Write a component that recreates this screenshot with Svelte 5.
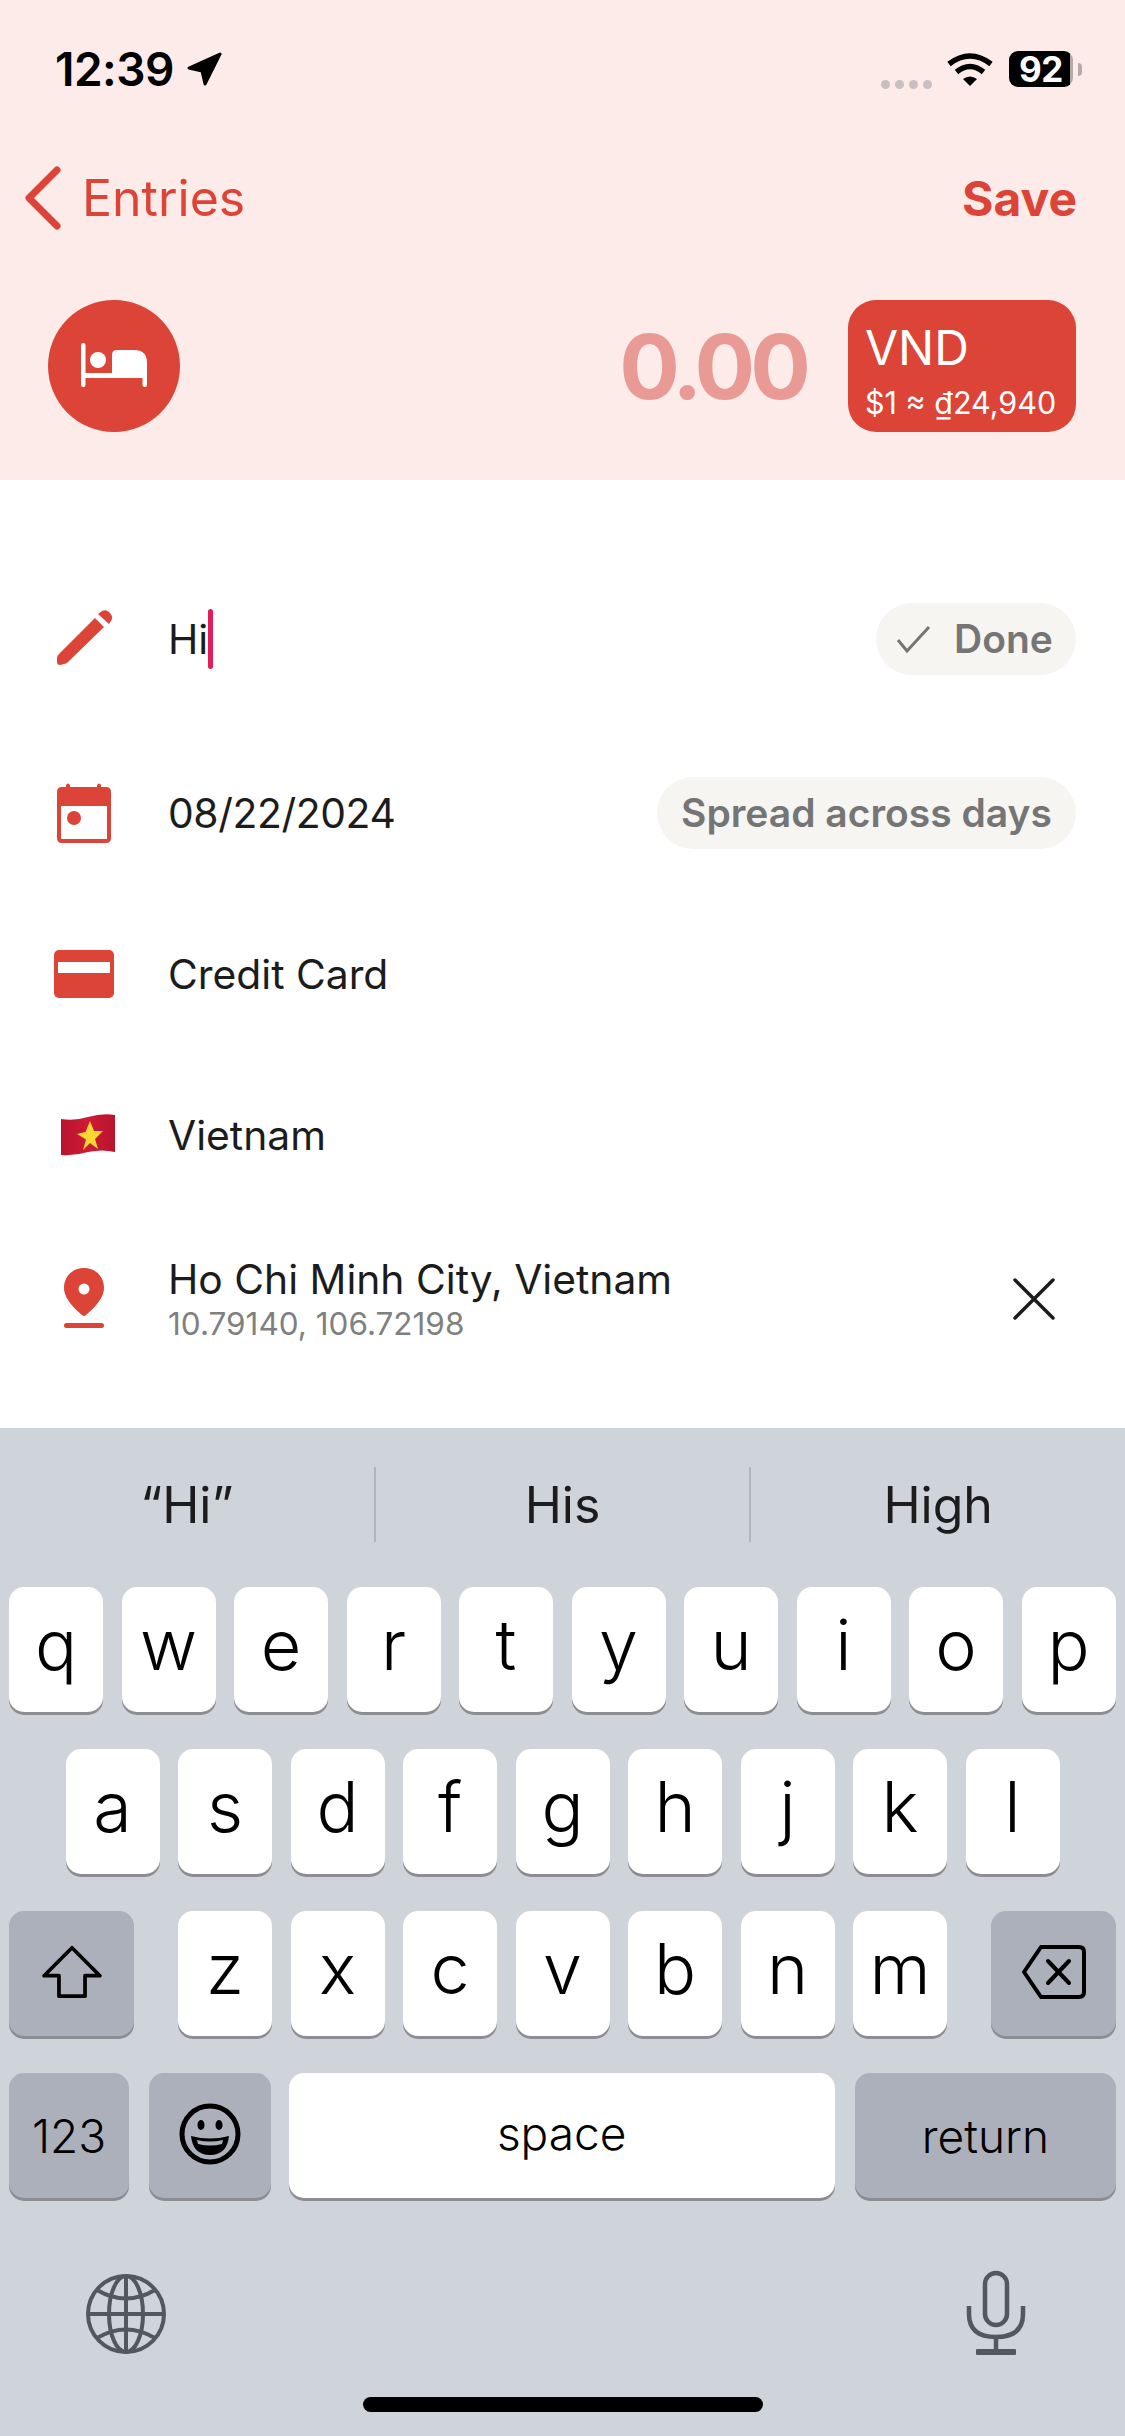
<script lang="ts">
  const rowOne = ["q", "w", "e", "r", "t", "y", "u", "i", "o", "p"];
  const rowTwo = ["a", "s", "d", "f", "g", "h", "j", "k", "l"];
  const rowThree = ["z", "x", "c", "v", "b", "n", "m"];
  const suggestions = ["“Hi”", "His", "High"];
</script>

<div class="screen">
  <header class="top">
    <div class="status">
      <div class="clock">
        <span>12:39</span>
        <svg class="arrow" viewBox="0 0 36 36" width="36" height="36">
          <path d="M34 3 L3 17 L16 20 L19 33 Z" fill="#000" stroke="#000" stroke-width="3" stroke-linejoin="round" />
        </svg>
      </div>
      <div class="indicators">
        <div class="dots"><i></i><i></i><i></i><i></i></div>
        <svg class="wifi" viewBox="0 0 46 36" width="46" height="36">
          <path d="M2 13 Q23 -3 44 13" fill="none" stroke="#000" stroke-width="5.5" />
          <path d="M9.5 21 Q23 10 36.5 21" fill="none" stroke="#000" stroke-width="5.5" />
          <path d="M16 28 Q23 23 30 28 L23 35 Z" fill="#000" />
        </svg>
        <div class="battery"><span>92</span></div>
        <i class="nub"></i>
      </div>
    </div>

    <nav class="nav">
      <div class="back">
        <svg viewBox="0 0 40 64" width="40" height="64">
          <path d="M33 4 L5 32 L33 60" fill="none" stroke="#dc4437" stroke-width="7" stroke-linecap="round" stroke-linejoin="round" />
        </svg>
        <span>Entries</span>
      </div>
      <span class="save">Save</span>
    </nav>

    <div class="amount-row">
      <div class="category">
        <svg viewBox="8 10 132 132" width="132" height="132">
          <rect x="41" y="53" width="4.5" height="44" rx="2.2" fill="#fff" />
          <rect x="102.500" y="80" width="4.500" height="17" rx="2.2" fill="#fff" />
          <rect x="41" y="83" width="66" height="5" fill="#fff" />
          <circle cx="58" cy="70" r="8" fill="#fff" />
          <path d="M72 84 V65 Q72 60 77 60 H94 Q107 60 107 73 V84 Z" fill="#fff" />
        </svg>
      </div>
      <div class="amount">
        <span class="value">0.00</span>
        <div class="currency">
          <span class="code">VND</span>
          <span class="rate">$1 ≈ ₫24,940</span>
        </div>
      </div>
    </div>
  </header>

  <main class="form">
    <div class="row first">
      <svg class="icon" viewBox="0 0 100 100" width="100" height="100">
        <path d="M55 29 L64 38 L28 73 Q26 75 24 75 L20 76 Q17 76 17 73 L17 69 Q17 67 19 65 Z" fill="#dc4437" />
        <path d="M58 25 L62 22 Q66 20 69 23 Q73 27 72 30 L69 35 Z" fill="#dc4437" />
      </svg>
      <div class="label">Hi<span class="cursor"></span></div>
      <div class="pill done">
        <svg viewBox="0 0 36 30" width="36" height="30">
          <path d="M2 16 L11 27 L33 3" fill="none" stroke="#757575" stroke-width="3" />
        </svg>
        Done
      </div>
    </div>

    <div class="row">
      <svg class="icon" viewBox="0 -7 100 100" width="100" height="100">
        <path fill-rule="evenodd" d="M22 17 H26 V15 Q28 12 30 15 V17 H57 V15 Q59 12 61 15 V17 H66 Q71 17 71 22 V68 Q71 73 66 73 H22 Q17 73 17 68 V22 Q17 17 22 17 Z M21 36 V69 H67 V36 Z" fill="#dc4437" />
        <circle cx="34" cy="48" r="7" fill="#dc4437" />
      </svg>
      <div class="label date">08/22/2024</div>
      <div class="pill">Spread across days</div>
    </div>

    <div class="row">
      <svg class="icon" viewBox="0 -15 100 100" width="100" height="100">
        <rect x="14" y="11" width="60" height="48" rx="5" fill="#dc4437" />
        <rect x="18" y="23" width="52" height="11" fill="#fff" />
      </svg>
      <div class="label">Credit Card</div>
    </div>

    <div class="row">
      <svg class="icon" viewBox="0 -14 100 100" width="100" height="100">
        <defs>
          <linearGradient id="flag" x1="0" x2="1" y1="0" y2="0">
            <stop offset="0" stop-color="#b8142f" />
            <stop offset="0.5" stop-color="#cf1a36" />
            <stop offset="1" stop-color="#b8142f" />
          </linearGradient>
        </defs>
        <path d="M21 20 Q35 22 48 18 Q62 14 75 16 L75 53 Q62 50 48 53 Q35 57 21 56 Z" fill="url(#flag)" />
        <path d="M50 22 L54 32 L63 32 L55 40 L58 50 L50 44 L43 51 L46 40.500 L37 35 L45.500 33 Z" fill="#fdd835" />
      </svg>
      <div class="label">Vietnam</div>
    </div>

    <div class="row location">
      <svg class="icon" viewBox="0 150 100 100" width="100" height="100">
        <path fill-rule="evenodd" d="M44 169 C56 169 64 178 64 189 C64 200 52 211 46 216 Q44 218 42 216 C36 211 24 200 24 189 C24 178 32 169 44 169 Z M44 184.500 A5.500 5.500 0 1 0 44 195.500 A5.500 5.500 0 1 0 44 184.500 Z" fill="#dc4437" />
        <rect x="24" y="224" width="40" height="5" rx="2.500" fill="#dc4437" />
      </svg>
      <div class="place">
        <div class="label">Ho Chi Minh City, Vietnam</div>
        <div class="coords">10.79140, 106.72198</div>
      </div>
      <svg class="clear" viewBox="0 0 44 44" width="44" height="44">
        <path d="M3 3 L41 41 M41 3 L3 41" stroke="#1c1c1c" stroke-width="3.500" stroke-linecap="round" />
      </svg>
    </div>
  </main>

  <section class="keyboard">
    <div class="suggestions">
      {#each suggestions as word}
        <div class="suggestion">{word}</div>
      {/each}
    </div>

    <div class="keys">
      <div class="key-row">
        {#each rowOne as k}
          <div class="key">{k}</div>
        {/each}
      </div>
      <div class="key-row center">
        {#each rowTwo as k}
          <div class="key">{k}</div>
        {/each}
      </div>
      <div class="key-row between">
        <div class="key fn wide">
          <svg viewBox="0 0 66 58" width="62" height="54">
            <path d="M33 3 L63 33 H47 V55 H19 V33 H3 Z" fill="none" stroke="#000" stroke-width="4" stroke-linejoin="round" />
          </svg>
        </div>
        <div class="letters">
          {#each rowThree as k}
            <div class="key">{k}</div>
          {/each}
        </div>
        <div class="key fn wide">
          <svg viewBox="0 0 66 56" width="66" height="56">
            <path d="M20 3 H58 Q63 3 63 8 V48 Q63 53 58 53 H20 L3 28 Z" fill="none" stroke="#000" stroke-width="4" stroke-linejoin="round" />
            <path d="M27 17 L48 39 M48 17 L27 39" stroke="#000" stroke-width="4" stroke-linecap="round" />
          </svg>
        </div>
      </div>
      <div class="key-row between">
        <div class="key fn small num">123</div>
        <div class="key fn emoji">
          <svg viewBox="0 0 64 64" width="64" height="64">
            <circle cx="32" cy="32" r="28" fill="none" stroke="#000" stroke-width="5" />
            <ellipse cx="23" cy="23" rx="3.500" ry="5" fill="#000" />
            <ellipse cx="41" cy="23" rx="3.500" ry="5" fill="#000" />
            <path d="M13 34 Q32 39 51 34 Q49 53 32 53 Q15 53 13 34 Z" fill="#000" />
            <path d="M19 38 Q32 41 45 38 L44 42 Q32 45 20 42 Z" fill="#abb0bb" />
          </svg>
        </div>
        <div class="key space">space</div>
        <div class="key fn return">return</div>
      </div>
    </div>

    <div class="kb-bottom">
      <svg viewBox="0 0 84 84" width="84" height="84">
        <g fill="none" stroke="#53575e" stroke-width="4">
          <circle cx="42" cy="42" r="38" />
          <ellipse cx="42" cy="42" rx="17" ry="38" />
          <path d="M42 4 V80 M4 42 H80" />
          <path d="M13 18 Q42 35 71 18 M13 66 Q42 49 71 66" />
        </g>
      </svg>
      <svg viewBox="0 0 60 86" width="60" height="86">
        <g fill="none" stroke="#53575e" stroke-width="4.500">
          <rect x="19" y="3" width="22" height="52" rx="11" />
          <path d="M3 36 V44 Q3 67 30 67 Q57 67 57 44 V36" />
          <path d="M30 67 V82" />
        </g>
        <rect x="10" y="79" width="40" height="6" rx="1" fill="#53575e" />
      </svg>
    </div>

    <div class="home-bar"></div>
  </section>
</div>

<style>
  :global(body) {
    margin: 0;
    background: #fff;
  }

  .screen {
    width: 1125px;
    height: 2436px;
    display: flex;
    flex-direction: column;
    font-family: Inter, "Liberation Sans", sans-serif;
    color: #1c1c1c;
    overflow: hidden;
  }

  .top {
    height: 480px;
    box-sizing: border-box;
    background: #fcebe9;
    padding-top: 51px;
  }

  .status {
    height: 36px;
    display: flex;
    justify-content: space-between;
    padding: 0 43px 0 55px;
  }

  .clock {
    display: flex;
    align-items: center;
    gap: 12px;
    font-size: 46px;
    font-weight: 600;
    color: #000;
    letter-spacing: -0.5px;
  }

  .indicators {
    display: flex;
    align-items: center;
  }

  .dots {
    display: flex;
    gap: 5px;
    margin: 30px 15px 0 0;
  }

  .dots i {
    width: 9px;
    height: 9px;
    border-radius: 50%;
    background: #c9bfc0;
  }

  .wifi {
    margin-right: 16px;
  }

  .battery {
    width: 64px;
    height: 36px;
    border-radius: 9px;
    background: linear-gradient(90deg, #000 96%, #b5abab 96%);
    display: flex;
    align-items: center;
    padding-left: 10px;
    box-sizing: border-box;
    color: #fff;
    font-size: 35px;
    font-weight: 700;
    letter-spacing: -0.5px;
  }

  .nub {
    width: 4px;
    height: 13px;
    margin-left: 5px;
    border-radius: 0 4px 4px 0;
    background: #b5abab;
  }

  .nav {
    height: 64px;
    margin-top: 79px;
    padding: 0 48px 0 24px;
    display: flex;
    align-items: center;
    justify-content: space-between;
    color: #dc4437;
    font-size: 50px;
  }

  .back {
    display: flex;
    align-items: center;
    gap: 18px;
  }

  .save {
    font-weight: 700;
    font-size: 48px;
  }

  .amount-row {
    margin-top: 70px;
    padding: 0 49px 0 48px;
    display: flex;
    align-items: center;
    justify-content: space-between;
  }

  .category {
    width: 132px;
    height: 132px;
    border-radius: 50%;
    background: #dc4437;
    display: flex;
  }

  .amount {
    display: flex;
    align-items: center;
    gap: 42px;
  }

  .value {
    font-size: 90px;
    font-weight: 700;
    letter-spacing: -5px;
    color: #e99a94;
  }

  .currency {
    width: 228px;
    height: 132px;
    box-sizing: border-box;
    padding: 18px 0 0 17px;
    border-radius: 28px;
    background: #dc4437;
    color: #fff;
    display: flex;
    flex-direction: column;
  }

  .code {
    font-size: 48px;
    line-height: 60px;
  }

  .rate {
    font-size: 30.5px;
    line-height: 40px;
    margin-top: 5px;
  }

  .form {
    height: 948px;
    box-sizing: border-box;
    padding-top: 65px;
  }

  .row {
    height: 161px;
    box-sizing: border-box;
    padding: 0 49px 0 40px;
    display: flex;
    align-items: center;
    gap: 28px;
  }

  .row.first {
    height: 187px;
  }

  .row.location {
    height: 167px;
  }

  .icon {
    flex: none;
  }

  .label {
    font-size: 40.8px;
    display: flex;
    align-items: center;
    flex: 1;
  }

  .label.date {
    letter-spacing: -0.4px;
  }

  .cursor {
    width: 5px;
    height: 60px;
    margin-left: 0;
    border-radius: 3px;
    background: #e01e5a;
  }

  .pill {
    height: 72px;
    padding: 0 24px;
    border-radius: 36px;
    background: #f6f5f2;
    color: #757575;
    font-size: 39px;
    font-weight: 600;
    display: flex;
    align-items: center;
    gap: 20px;
  }

  .pill.done {
    width: 200px;
    box-sizing: border-box;
    padding: 0 0 0 20px;
    gap: 22px;
  }

  .place {
    flex: 1;
  }

  .coords {
    font-size: 31.5px;
    color: #808080;
  }

  .clear {
    margin-right: 20px;
  }

  .keyboard {
    flex: 1;
    background: #cfd3da;
    display: flex;
    flex-direction: column;
    position: relative;
  }

  .suggestions {
    height: 159px;
    display: flex;
    align-items: center;
    padding-bottom: 6px;
    box-sizing: border-box;
  }

  .suggestion {
    flex: 1;
    height: 75px;
    display: flex;
    align-items: center;
    justify-content: center;
    font-size: 50px;
    color: #1c1c1c;
    border-right: 2px solid #b1b5bc;
  }

  .suggestion:last-child {
    border-right: 0;
  }

  .keys {
    padding: 0 9px;
    display: flex;
    flex-direction: column;
    gap: 37px;
  }

  .key-row {
    display: flex;
    gap: 18.5px;
  }

  .key-row.center {
    justify-content: center;
  }

  .key-row.between {
    justify-content: space-between;
    gap: 0;
  }

  .letters {
    display: flex;
    gap: 18.5px;
  }

  .key {
    width: 94px;
    height: 125px;
    flex: none;
    border-radius: 15px;
    background: #fff;
    box-shadow: 0 3px 0 #8b8d92;
    display: flex;
    align-items: center;
    justify-content: center;
    font-size: 70px;
    font-weight: 350;
    color: #000;
    padding-bottom: 11px;
    box-sizing: border-box;
  }

  .key.fn {
    background: #abb0bb;
    padding-bottom: 3px;
  }

  .key.wide {
    width: 125px;
  }

  .key.small {
    width: 120px;
  }

  .key.num {
    font-size: 46px;
    margin-right: 20px;
    padding-bottom: 0;
  }

  .key.emoji {
    width: 122px;
    margin-right: 17px;
  }

  .key.space {
    width: 546px;
    font-size: 46px;
    margin-right: 20px;
    padding-bottom: 6px;
  }

  .key.return {
    width: 261px;
    font-size: 46px;
    padding-bottom: 0;
  }

  .kb-bottom {
    margin-top: 72px;
    padding: 0 99px 0 84px;
    display: flex;
    justify-content: space-between;
    align-items: flex-end;
  }

  .home-bar {
    position: absolute;
    left: 363px;
    bottom: 24px;
    width: 400px;
    height: 15px;
    border-radius: 8px;
    background: #000;
  }
</style>
